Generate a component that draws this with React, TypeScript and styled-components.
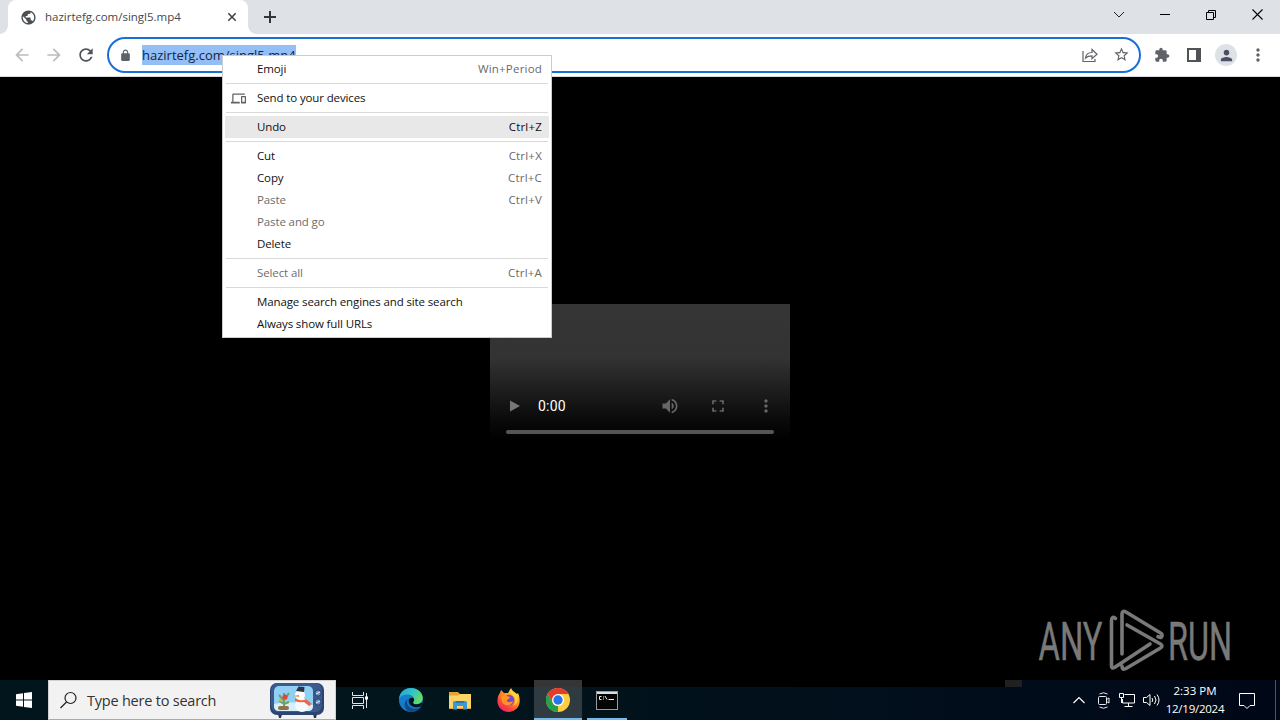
import React from "react";
import styled, { createGlobalStyle } from "styled-components";

const UI = `"Open Sans", "Noto Sans", sans-serif`;

const Global = createGlobalStyle`
  * { box-sizing: border-box; }
  body { margin: 0; background: #000; overflow: hidden; font-family: ${UI}; }
  svg { display: block; flex: none; }
`;

const Desktop = styled.div`
  position: relative;
  width: 1280px;
  height: 720px;
  display: flex;
  flex-direction: column;
  background: #000;
  overflow: hidden;
`;
const Label = styled.span<{ $size: number; $spacing?: number; $color?: string }>`
  font-size: ${(p) => p.$size}px;
  letter-spacing: ${(p) => p.$spacing ?? 0}px;
  color: ${(p) => p.$color ?? "#000"};
  white-space: pre;
  line-height: 1.3;
`;

/* Browser chrome */
const TabStrip = styled.div`
  height: 34px;
  display: flex;
  background: #dee1e6;
  padding-left: 8px;
`;
const Tab = styled.div`
  width: 240px;
  height: 34px;
  background: #fff;
  border-radius: 8px 8px 0 0;
  display: flex;
  align-items: center;
  padding: 0 10px 0 12px;
  gap: 8px;
`;
const TabTitle = styled.div`
  flex: 1;
  display: flex;
`;
const TabFlare = styled.div<{ $side: "left" | "right" }>`
  width: 8px;
  height: 8px;
  align-self: flex-end;
  margin-left: ${(p) => (p.$side === "left" ? "-8px" : "0")};
  background: radial-gradient(
    circle at ${(p) => (p.$side === "left" ? "0 0" : "8px 0")},
    #dee1e6 7.5px,
    #fff 8px
  );
`;
const NewTab = styled.div`
  margin: 10px 0 0 7px;
`;
const WindowButtons = styled.div`
  margin-left: auto;
  width: 184px;
  display: flex;
  align-items: center;
  height: 29px;
`;
const WindowButton = styled.div`
  width: 46px;
  display: flex;
  justify-content: center;
`;
const Toolbar = styled.div`
  height: 43px;
  background: #fff;
  display: flex;
  align-items: center;
  padding-left: 12px;
  border-bottom: 1px solid #d8dade;
`;
const NavIcons = styled.div`
  flex: none;
  display: flex;
  gap: 12px;
  width: 95px;
`;
const Omnibox = styled.div`
  flex: none;
  width: 1034px;
  height: 36px;
  border: 2px solid #1a6fd6;
  border-radius: 18px;
  display: flex;
  align-items: center;
  padding: 0 9px 0 10px;
`;
const Url = styled.div`
  margin-left: 10px;
  height: 20px;
  width: 154px;
  background: #94bff6;
  display: flex;
  align-items: center;
`;
const OmniActions = styled.div`
  margin-left: auto;
  display: flex;
  gap: 14px;
`;
const ToolbarActions = styled.div`
  flex: none;
  display: flex;
  align-items: center;
  margin-left: 12px;
`;
const ActionSlot = styled.div<{ $width: number }>`
  width: ${(p) => p.$width}px;
  display: flex;
  justify-content: center;
`;
const Avatar = styled.div`
  flex: none;
  width: 22px;
  height: 22px;
  border-radius: 50%;
  background: #dee1e6;
  display: flex;
  align-items: center;
  justify-content: center;
`;

/* Page with the video */
const Page = styled.div`
  height: 603px;
  padding-top: 227px;
  display: flex;
  justify-content: center;
  align-items: flex-start;
`;
const Player = styled.div`
  width: 300px;
  height: 150px;
  padding: 82px 16px 0;
  background: linear-gradient(#353535 0%, #333 36%, #222 53%, #0b0b0b 76%, #000 90%);
`;
const Controls = styled.div`
  height: 40px;
  display: flex;
  align-items: center;
`;
const Time = styled.span`
  font: 14px Roboto, sans-serif;
  letter-spacing: 0.2px;
  color: #fff;
  margin-left: 16px;
  flex: none;
  width: 122px;
`;
const Buttons = styled.div`
  flex: none;
  display: flex;
  gap: 28px;
`;
const Track = styled.div`
  height: 4px;
  margin-top: 4px;
  border-radius: 2px;
  background: #555;
`;
const Watermark = styled.div`
  position: absolute;
  left: 1034px;
  top: 604px;
`;

/* Context menu */
const Menu = styled.div`
  position: absolute;
  left: 222px;
  top: 55px;
  width: 330px;
  height: 283px;
  padding: 2px;
  border: 1px solid #ccc;
  background: #fff;
`;
const MenuRow = styled.div<{ $active?: boolean }>`
  height: 22px;
  display: flex;
  align-items: center;
  padding: 0 7px 0 6px;
  background: ${(p) => (p.$active ? "#e8e8e8" : "transparent")};
`;
const MenuIcon = styled.div`
  width: 26px;
`;
const Shortcut = styled.div`
  margin-left: auto;
  display: flex;
`;
const Separator = styled.div`
  height: 1px;
  margin: 3px 1px;
  background: #d9d9d9;
`;

/* Taskbar */
const Taskbar = styled.div`
  height: 40px;
  display: flex;
  background: linear-gradient(90deg, #02141c 0, #02141c 500px, #010d1b 960px, #000817 1280px);
`;
const Start = styled.div`
  width: 48px;
  display: flex;
  align-items: center;
  justify-content: center;
`;
const Search = styled.div`
  width: 288px;
  background: #f2f2f2;
  border: 1px solid #d0d0d0;
  border-bottom-color: #aaa;
  display: flex;
  align-items: center;
  padding: 0 11px 0 11px;
  gap: 9px;
`;
const SearchText = styled.div`
  flex: 1;
  display: flex;
  padding-top: 2px;
`;
const Apps = styled.div`
  width: 669px;
  display: flex;
  background: linear-gradient(#000 7px, transparent 7px);
`;
const AppButton = styled.div<{ $state?: "active" | "open" }>`
  width: ${(p) => (p.$state === "open" ? 40 : p.$state === "active" ? 48 : 49.5)}px;
  margin-left: ${(p) => (p.$state === "open" ? 5 : 0)}px;
  display: flex;
  align-items: center;
  justify-content: center;
  background: ${(p) => (p.$state === "active" ? "linear-gradient(#333536 7px, #2f3b41 7px)" : "none")};
  border-bottom: ${(p) => (p.$state ? "2px solid #76b9ed" : "0")};
  padding-top: ${(p) => (p.$state ? 2 : 0)}px;
`;
const Patch = styled.div`
  width: 17px;
  height: 7px;
  background: #202020;
`;
const Tray = styled.div`
  margin-left: auto;
  display: flex;
  align-items: center;
`;
const TrayIcons = styled.div`
  display: flex;
  align-items: center;
  gap: 7px;
  margin-right: 3px;
`;
const Chevron = styled.div`
  margin-right: 3px;
`;
const Clock = styled.div`
  width: 64px;
  display: flex;
  flex-direction: column;
  align-items: center;
`;
const ClockLine = styled(Label)`
  line-height: 18px;
`;
const Notice = styled.div`
  width: 40px;
  margin-right: 8px;
  display: flex;
  justify-content: center;
  padding-top: 1px;
`;
const ShowDesktop = styled.div`
  width: 5px;
  height: 40px;
  border-left: 1px solid #4d5665;
`;

const Glyph = ({ d, s = 20, c = "#5f6368" }: { d: string; s?: number; c?: string }) => (
  <svg width={s} height={s} viewBox="0 0 24 24" fill={c}><path d={d} /></svg>
);

const BACK = "M20 11H7.83l5.59-5.59L12 4l-8 8 8 8 1.41-1.41L7.83 13H20v-2z";
const FORWARD = "M12 4l-1.41 1.41L16.17 11H4v2h12.17l-5.58 5.59L12 20l8-8z";
const RELOAD = "M17.65 6.35C16.2 4.9 14.21 4 12 4c-4.42 0-7.99 3.58-7.99 8s3.57 8 7.99 8c3.73 0 6.84-2.55 7.73-6h-2.08c-.82 2.33-3.04 4-5.65 4-3.31 0-6-2.69-6-6s2.69-6 6-6c1.66 0 3.14.69 4.22 1.78L13 11h7V4l-2.35 2.35z";
const LOCK = "M18 8h-1V6c0-2.76-2.24-5-5-5S7 3.24 7 6v2H6c-1.1 0-2 .9-2 2v10c0 1.1.9 2 2 2h12c1.1 0 2-.9 2-2V10c0-1.1-.9-2-2-2zM9 6c0-1.66 1.34-3 3-3s3 1.34 3 3v2H9V6z";
const STAR = "M22 9.24l-7.19-.62L12 2 9.19 8.63 2 9.24l5.46 4.73L5.82 21 12 17.27 18.18 21l-1.63-7.03L22 9.24zM12 15.4l-3.76 2.27 1-4.28-3.32-2.88 4.38-.38L12 6.1l1.71 4.04 4.38.38-3.32 2.88 1 4.28L12 15.4z";
const PUZZLE = "M20.5 11H19V7c0-1.1-.9-2-2-2h-4V3.5C13 2.12 11.88 1 10.5 1S8 2.12 8 3.5V5H4c-1.1 0-1.99.9-1.99 2v3.8H3.5c1.49 0 2.7 1.21 2.7 2.7s-1.21 2.7-2.7 2.7H2V20c0 1.1.9 2 2 2h3.8v-1.5c0-1.49 1.21-2.7 2.7-2.7 1.49 0 2.7 1.21 2.7 2.7V22H17c1.1 0 2-.9 2-2v-4h1.5c1.38 0 2.5-1.12 2.5-2.5S21.88 11 20.5 11z";
const PERSON = "M12 12c2.21 0 4-1.79 4-4s-1.79-4-4-4-4 1.79-4 4 1.79 4 4 4zm0 2c-2.67 0-8 1.34-8 4v2h16v-2c0-2.66-5.33-4-8-4z";
const MORE = "M12 8c1.1 0 2-.9 2-2s-.9-2-2-2-2 .9-2 2 .9 2 2 2zm0 2c-1.1 0-2 .9-2 2s.9 2 2 2 2-.9 2-2-.9-2-2-2zm0 6c-1.1 0-2 .9-2 2s.9 2 2 2 2-.9 2-2-.9-2-2-2z";
const GLOBE = "M12 2C6.48 2 2 6.48 2 12s4.48 10 10 10 10-4.48 10-10S17.52 2 12 2zm-1 17.93c-3.95-.49-7-3.85-7-7.93 0-.62.08-1.21.21-1.79L9 15v1c0 1.1.9 2 2 2v1.93zm6.9-2.54c-.26-.81-1-1.39-1.9-1.39h-1v-3c0-.55-.45-1-1-1H8v-2h2c.55 0 1-.45 1-1V7h2c1.1 0 2-.9 2-2v-.41c2.93 1.19 5 4.06 5 7.41 0 2.08-.8 3.97-2.1 5.39z";
const DEVICES = "M4 6h18V4H4c-1.1 0-2 .9-2 2v11H0v3h14v-3H4V6zm19 2h-6c-.55 0-1 .45-1 1v10c0 .55.45 1 1 1h6c.55 0 1-.45 1-1V9c0-.55-.45-1-1-1zm-1 9h-4v-7h4v7z";
const VOLUME = "M3 9v6h4l5 5V4L7 9H3zm13.5 3c0-1.77-1.02-3.29-2.5-4.03v8.05c1.48-.73 2.5-2.25 2.5-4.02zM14 3.23v2.06c2.89.86 5 3.54 5 6.71s-2.11 5.85-5 6.71v2.06c4.01-.91 7-4.49 7-8.77s-2.99-7.86-7-8.77z";
const FULL = "M7 14H5v5h5v-2H7v-3zm-2-4h2V7h3V5H5v5zm12 7h-3v2h5v-5h-2v3zM14 5v2h3v3h2V5h-5z";

type Item = { text: string; keys?: string; tone?: "off" | "active"; icon?: boolean };
const groups: Item[][] = [
  [{ text: "Emoji", keys: "Win+Period" }],
  [{ text: "Send to your devices", icon: true }],
  [{ text: "Undo", keys: "Ctrl+Z", tone: "active" }],
  [
    { text: "Cut", keys: "Ctrl+X" },
    { text: "Copy", keys: "Ctrl+C" },
    { text: "Paste", keys: "Ctrl+V", tone: "off" },
    { text: "Paste and go", tone: "off" },
    { text: "Delete" },
  ],
  [{ text: "Select all", keys: "Ctrl+A", tone: "off" }],
  [{ text: "Manage search engines and site search" }, { text: "Always show full URLs" }],
];

const ContextMenu = () => (
  <Menu>
    {groups.map((g, i) => (
      <React.Fragment key={i}>
        {i > 0 && <Separator />}
        {g.map((it) => (
          <MenuRow key={it.text} $active={it.tone === "active"}>
            <MenuIcon>{it.icon && <Glyph d={DEVICES} s={15} />}</MenuIcon>
            <Label $size={11.5} $spacing={-0.12} $color={it.tone === "off" ? "#6d6d6d" : "#111"}>{it.text}</Label>
            {it.keys && (
              <Shortcut>
                <Label $size={11.5} $spacing={0.2} $color={it.tone === "active" ? "#111" : "#6a6a6a"}>{it.keys}</Label>
              </Shortcut>
            )}
          </MenuRow>
        ))}
      </React.Fragment>
    ))}
  </Menu>
);

const Holiday = () => (
  <svg width="54" height="36" viewBox="0 0 54 36">
    <path d="M8 32h4l-1 4H9zM43 32h4l-1 4h-2z" fill="#26375a" />
    <rect x="0" y="1" width="54" height="32" rx="7" fill="#2d4470" />
    <rect x="1" y="1" width="51" height="29" rx="7" fill="#3d5a8c" />
    <rect x="4" y="4" width="39" height="25" rx="5" fill="#8fd0f4" />
    <path d="M4 22q14-4 39 1v1q0 5-5 5H9q-5 0-5-5z" fill="#d5effc" />
    <path d="M14 27V11M14 19l-5-6M14 18l5-7M14 22l-5-3M14 22l5-2" stroke="#6ba26b" strokeWidth="2" fill="none" />
    <circle cx="15" cy="15" r="2.6" fill="#dc493c" />
    <circle cx="10" cy="18" r="1.4" fill="#e9b23e" />
    <rect x="8" y="24" width="11" height="4" rx="2" fill="#987042" />
    <circle cx="32" cy="23" r="7" fill="#f5faff" />
    <circle cx="30" cy="13" r="5" fill="#fff" />
    <path d="M26 9l8 1 .5-5-6-.5z" fill="#303448" />
    <path d="M25 16q6 4 11 1l6 5-3 2-5-4q-5 1-9-1z" fill="#ee6946" />
    <path d="M29 13l-6 1 6 1z" fill="#ee873a" />
    <circle cx="48" cy="11" r="3.2" fill="#6a91c4" stroke="#263d68" />
    <circle cx="48" cy="20" r="3.2" fill="#6a91c4" stroke="#263d68" />
    <path d="M46 12l4-2M46 21l4-2" stroke="#e5effa" />
  </svg>
);

const Edge = () => (
  <svg width="26" height="26" viewBox="-0.8 0 24 24">
    <defs>
      <linearGradient id="eg" x1="0" y1="0" x2="1" y2=".5"><stop stopColor="#249fdc" /><stop offset=".55" stopColor="#32c5c3" /><stop offset="1" stopColor="#65dc63" /></linearGradient>
      <linearGradient id="eb" x1="0" y1="0" x2="0" y2="1"><stop stopColor="#1683ce" /><stop offset="1" stopColor="#1676cb" /></linearGradient>
    </defs>
    <circle cx="12" cy="12" r="11" fill="url(#eb)" />
    <path d="M1 11C2 4 7 1 12 1c7 0 11 5 11 9 0 4-3 6-6 6-2 0-3-.8-3-1.500 0-.8 1-1.200 1-3 0-2-2-4.500-6-4.500-4 0-7 2-8 4z" fill="url(#eg)" />
    <path d="M9 11c-2 5 2 9 7 9 2 0 4-.6 5.400-1.500C19 22 15 23.500 11 23 6 21 4.500 14 9 11z" fill="#114a8a" />
    <path d="M10 12c1-3 5-2.500 5-.5 0 1.800-1 2-1 3 0 .7 1 1.500 3 1.500 2 0 4-1 5.500-2l-.8 3.500c-6 3-12.200 0-11.700-5.500z" fill="#02141c" />
  </svg>
);
const Folder = () => (
  <svg width="22" height="19" viewBox="0 0 22 19">
    <path d="M0 1h9l2 2h11v15H0z" fill="#e8a52b" />
    <path d="M0 4.500h9l2-1.500h11v14H0z" fill="#fbd468" />
    <path d="M4 18.500v-7q0-1.500 1.500-1.500h11q1.500 0 1.500 1.500v7h-4V15H8v3.500z" fill="#3b97d6" />
    <path d="M7 10h8v2H7z" fill="#2677b5" />
  </svg>
);
const Firefox = () => (
  <svg width="24" height="24" viewBox="0 0 24 24">
    <defs><linearGradient id="ff" x1=".85" y1="0" x2=".2" y2="1"><stop stopColor="#fff34b" /><stop offset=".35" stopColor="#ffa51e" /><stop offset=".7" stopColor="#ff4b39" /><stop offset="1" stopColor="#ee1c6e" /></linearGradient></defs>
    <path d="M3 5l1-3 3 3h4l3-5c1 3 4 4 6 6l1-1c4 9 1 18-9 19C4 24 0 18 .5 12 .8 8 2 6 3 5z" fill="url(#ff)" />
    <circle cx="12" cy="12" r="5.200" fill="#7747cf" />
    <path d="M4 8c3-2 5-1 6 0l3 1c0 2-3 2-3 4 1 2 4 1 6 0-1 5-8 6-11 1z" fill="#ff9424" />
    <path d="M13 2c-1 3 3 4 5 8 1 3 0 6-2 8 4-2 6-6 4-11-2-3-5-3-7-5z" fill="#ffd53b" />
  </svg>
);
const Chrome = () => (
  <svg width="24" height="24" viewBox="0 0 24 24">
    <circle cx="12" cy="12" r="12" fill="#ffcd40" />
    <path d="M1.600 6A12 12 0 0 1 22.400 6H12L6.800 15z" fill="#e33b2e" />
    <path d="M1.600 6l5.200 9q2 3.200 5.800 3L12 24A12 12 0 0 1 1.600 6z" fill="#24a04b" />
    <path d="M12 24l5.200-9L12 17z" fill="#ffcd40" />
    <circle cx="12" cy="12" r="6" fill="#fff" />
    <circle cx="12" cy="12" r="4.700" fill="#2776e8" />
  </svg>
);
const Terminal = () => (
  <svg width="22" height="19" viewBox="0 0 22 19">
    <rect x=".5" y=".5" width="21" height="18" fill="#050505" stroke="#9a9a9a" />
    <path d="M1 1h20v2H1z" fill="#ddd" />
    <path d="M5.500 5.500H3.500v3h2M7.500 5.500v1M7.500 7.500v1M9 5l2 3.500M12.500 8.500H18" stroke="#eee" fill="none" />
  </svg>
);

export default function App() {
  return (
    <>
      <Global />
      <Desktop>
        <TabStrip>
          <TabFlare $side="left" />
          <Tab>
            <Glyph d={GLOBE} s={17} c="#4b4f53" />
            <TabTitle><Label $size={11.5} $color="#45484c">hazirtefg.com/singl5.mp4</Label></TabTitle>
            <svg width="12" height="12" viewBox="0 0 12 12" stroke="#3c4043" strokeWidth="1.500"><path d="M2.300 2.300l7.400 7.400M9.700 2.300l-7.400 7.400" /></svg>
          </Tab>
          <TabFlare $side="right" />
          <NewTab><svg width="14" height="14" viewBox="0 0 14 14" stroke="#333639" strokeWidth="2"><path d="M7 1v12M1 7h12" /></svg></NewTab>
          <WindowButtons>
            <WindowButton><svg width="12" height="8" viewBox="0 0 12 8" fill="none" stroke="#222"><path d="M1 1l5 5 5-5" /></svg></WindowButton>
            <WindowButton><svg width="10" height="10" stroke="#000"><path d="M0 4.500h10" /></svg></WindowButton>
            <WindowButton><svg width="10" height="10" fill="none" stroke="#000"><path d="M.5 2.500h7v7h-7zM2.500 2V.5h7v7H8" /></svg></WindowButton>
            <WindowButton><svg width="11" height="11" viewBox="0 0 11 11" stroke="#000" strokeWidth="1.100"><path d="M.5.5l10 10M10.500.5l-10 10" /></svg></WindowButton>
          </WindowButtons>
        </TabStrip>
        <Toolbar>
          <NavIcons>
            <Glyph d={BACK} c="#babcbe" />
            <Glyph d={FORWARD} c="#babcbe" />
            <Glyph d={RELOAD} c="#4f5357" />
          </NavIcons>
          <Omnibox>
            <Glyph d={LOCK} s={13} />
            <Url><Label $size={13} $color="#12253f">hazirtefg.com/singl5.mp4</Label></Url>
            <OmniActions>
              <svg width="18" height="18" viewBox="0 0 18 18" fill="none" stroke="#5f6368" strokeWidth="1.200"><path d="M2 5v10.500h12V13M4.500 12c.5-4 3-5.500 6.500-5.500V3.500l5 4.700-5 4.500V9.800c-3 0-5 .7-6.500 2.200z" /></svg>
              <Glyph d={STAR} s={17} />
            </OmniActions>
          </Omnibox>
          <ToolbarActions>
            <ActionSlot $width={18}><Glyph d={PUZZLE} s={16} /></ActionSlot>
            <ActionSlot $width={46}><svg width="14" height="14"><path d="M0 0h14v14H0zM2 2v10h7V2z" fill="#4f5357" fillRule="evenodd" /></svg></ActionSlot>
            <ActionSlot $width={18}><Avatar><Glyph d={PERSON} s={17} c="#4b5065" /></Avatar></ActionSlot>
            <ActionSlot $width={46}><Glyph d={MORE} s={20} /></ActionSlot>
          </ToolbarActions>
        </Toolbar>
        <Page>
          <Player>
            <Controls>
              <svg width="16" height="16"><path d="M4 2.500l10 5.500-10 5.500z" fill="#777" /></svg>
              <Time>0:00</Time>
              <Buttons>
                <Glyph d={VOLUME} c="#666" />
                <Glyph d={FULL} c="#666" />
                <Glyph d={MORE} c="#666" />
              </Buttons>
            </Controls>
            <Track />
          </Player>
        </Page>
        <Taskbar>
          <Start>
            <svg width="16" height="16"><path d="M0 2.200L7 1.200V7.500H0zM8 1.100L16 0v7.500H8zM0 8.500h7v6.300l-7-1zM8 8.500h8V16l-8-1.100z" fill="#fff" /></svg>
          </Start>
          <Search>
            <svg width="18" height="18" fill="none" stroke="#222" strokeWidth="1.200"><circle cx="10.500" cy="7" r="5.500" /><path d="M6.500 11l-6 6" /></svg>
            <SearchText><Label $size={14.5} $spacing={-0.22} $color="#333">Type here to search</Label></SearchText>
            <Holiday />
          </Search>
          <Apps>
            <AppButton>
              <svg width="17" height="17" fill="none" stroke="#dfe5e8"><path d="M.5 0v3.500h11V0M.5 5.500h11v6H.5zM.5 17v-3.500h11V17M14.500 1v15" /><path d="M13 4.500h3v3h-3z" fill="#fff" stroke="none" /></svg>
            </AppButton>
            <AppButton><Edge /></AppButton>
            <AppButton><Folder /></AppButton>
            <AppButton><Firefox /></AppButton>
            <AppButton $state="active"><Chrome /></AppButton>
            <AppButton $state="open"><Terminal /></AppButton>
          </Apps>
          <Patch />
          <Tray>
            <TrayIcons>
              <Chevron><svg width="12" height="8" fill="none" stroke="#fff" strokeWidth="1.200"><path d="M.5 7L6 1.500 11.500 7" /></svg></Chevron>
              <svg width="17" height="17" fill="none" stroke="#e6e9ee"><rect x="3.500" y="4.500" width="8" height="8" rx="1" /><path d="M11.500 7.500l2.500-1.500v5l-2.500-1.500M4.500 2q4-2.500 8 0M4.500 15q4 2.500 8 0" /></svg>
              <svg width="17" height="16" fill="none" stroke="#fff"><path d="M5.500 2.500h10v8.500h-12V7M9.500 11v3M5.500 14.500h8M.5 1.500h4v4h-4zM2.500 5.500V11" /></svg>
              <svg width="17" height="16" fill="none" stroke="#fff"><path d="M.5 5.500h3l3.500-3v11l-3.500-3h-3zM9 6q1.500 2 0 4M11.500 4q3 4 0 8M14 2.500q4 5.500 0 11" /></svg>
            </TrayIcons>
            <Clock>
              <ClockLine $size={11.5} $color="#fff">2:33 PM</ClockLine>
              <ClockLine $size={11.5} $spacing={-0.25} $color="#fff">12/19/2024</ClockLine>
            </Clock>
            <Notice><svg width="16" height="16" fill="none" stroke="#fff"><path d="M.5.5h15v12H11l-3 3-3-3H.5z" /></svg></Notice>
            <ShowDesktop />
          </Tray>
        </Taskbar>
        <Watermark>
          <svg width="216" height="76" fill="none" stroke="#797979" strokeWidth="3.600" strokeLinejoin="round" strokeLinecap="round">
            <g fill="#797979" stroke="#797979" strokeWidth="0.500" fontFamily="Roboto" fontWeight="400" fontSize="53">
              <text x="4.500" y="55.500" textLength="64" lengthAdjust="spacingAndGlyphs">ANY</text>
              <text x="134" y="55.500" textLength="64" lengthAdjust="spacingAndGlyphs">RUN</text>
            </g>
            <path d="M81.500 14.500q-4-3-4 2V62q0 3 3 1.500L116 40M88 50V10q0-4 4-2l34.500 21q3 2 .5 4.500l-3-.8M93 21l33.500 19q3 2 0 4L92 64.500q-4 2-4-2.500" />
          </svg>
        </Watermark>
        <ContextMenu />
      </Desktop>
    </>
  );
}
